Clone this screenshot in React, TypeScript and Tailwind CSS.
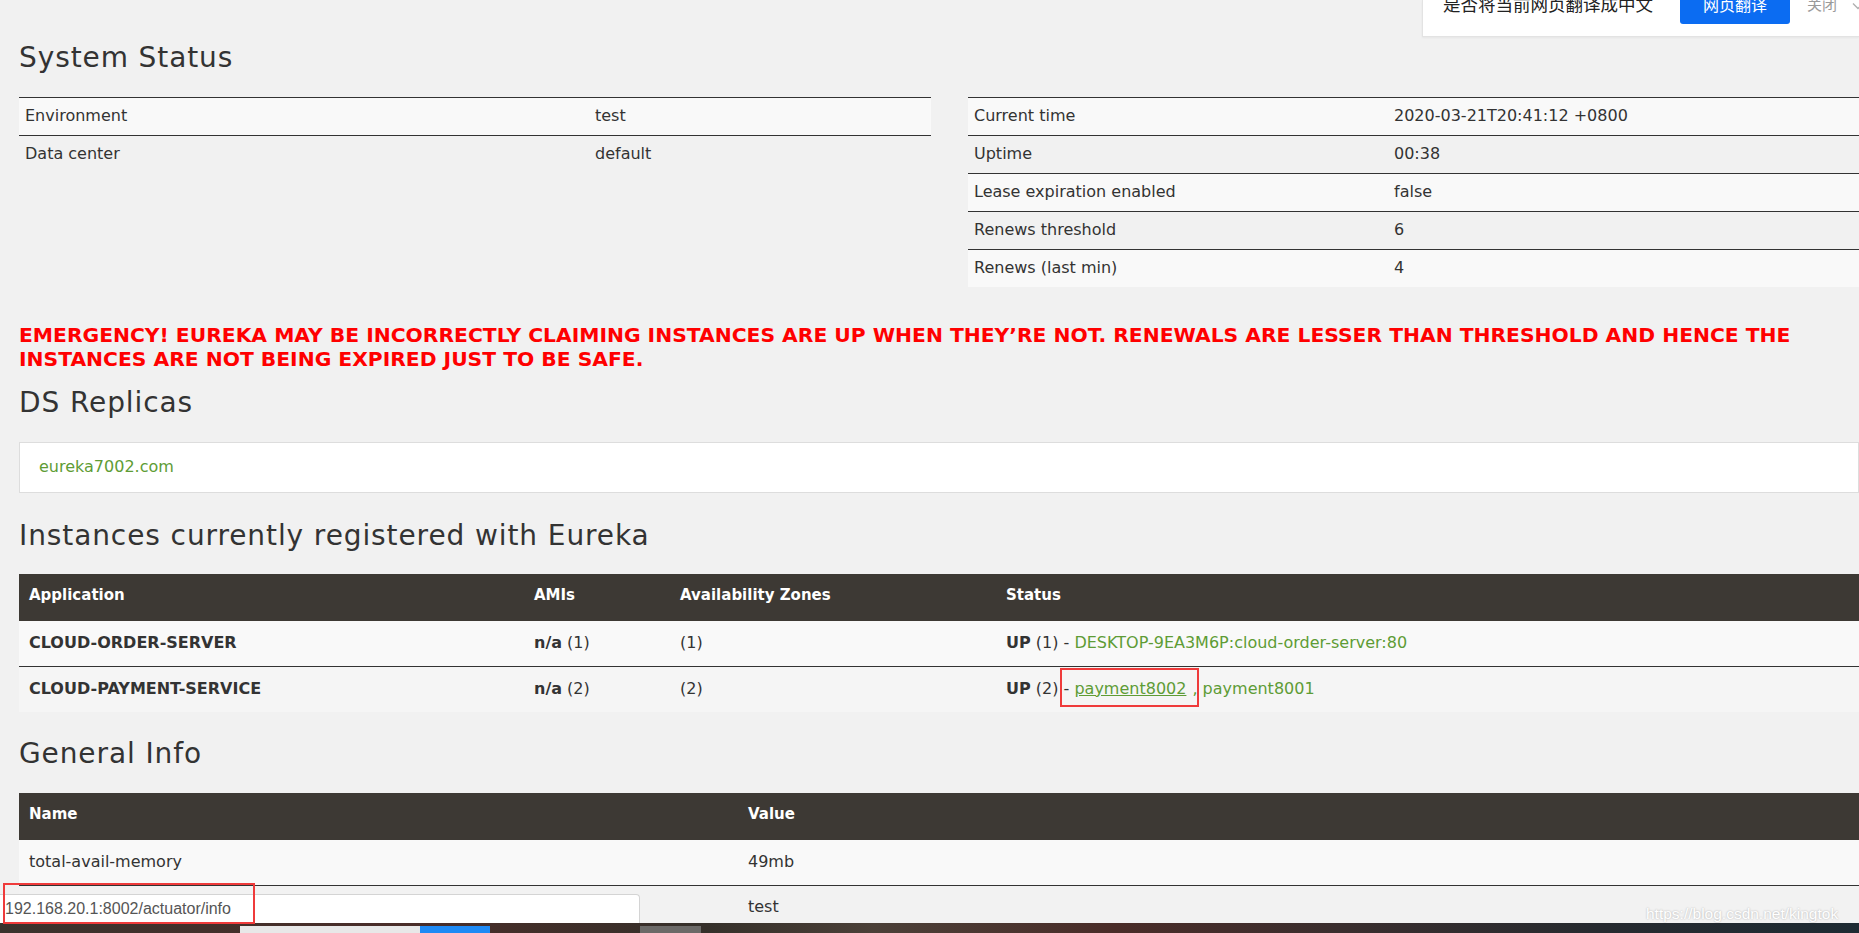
import React from "react";

const link = "text-[#5e9c35]";

function StatusTable({
  rows,
  labelClass,
}: {
  rows: [string, string][];
  labelClass: string;
}) {
  return (
    <div>
      {rows.map(([k, v], i) => (
        <div
          key={k}
          className={`flex h-[38px] items-center border-t border-[#333] pb-[2px] ${
            i % 2 === 0 ? "bg-[#f9f9f9]" : ""
          }`}
        >
          <div className={`${labelClass} shrink-0 px-[6px]`}>{k}</div>
          <div className="px-[6px]">{v}</div>
        </div>
      ))}
    </div>
  );
}

function Heading({ children, className = "" }: { children: React.ReactNode; className?: string }) {
  return (
    <h2 className={`h-[32px] text-[28px] leading-[32px] tracking-[0.9px] text-[#333] ${className}`}>
      {children}
    </h2>
  );
}

export default function App() {
  return (
    <div className="relative h-[933px] w-[1859px] overflow-hidden bg-[#f1f1f1] font-['DejaVu_Sans',sans-serif] text-[16px] text-[#333]">
      <div className="pl-[19px] pt-[42px]">
        <Heading>System Status</Heading>

        <div className="mt-[23px] flex gap-[37px]">
          <div className="w-[912px] shrink-0">
            <StatusTable
              labelClass="w-[570px]"
              rows={[
                ["Environment", "test"],
                ["Data center", "default"],
              ]}
            />
          </div>
          <div className="flex-1">
            <StatusTable
              labelClass="w-[420px]"
              rows={[
                ["Current time", "2020-03-21T20:41:12 +0800"],
                ["Uptime", "00:38"],
                ["Lease expiration enabled", "false"],
                ["Renews threshold", "6"],
                ["Renews (last min)", "4"],
              ]}
            />
          </div>
        </div>

        <div className="mt-[36px] text-[20.3px] font-bold leading-[24px] text-[#ff0000]">
          <div className="whitespace-nowrap">
            EMERGENCY! EUREKA MAY BE INCORRECTLY CLAIMING INSTANCES ARE UP WHEN THEY’RE NOT. RENEWALS ARE LESSER THAN THRESHOLD AND HENCE THE
          </div>
          <div className="whitespace-nowrap">INSTANCES ARE NOT BEING EXPIRED JUST TO BE SAFE.</div>
        </div>

        <Heading className="mt-[16px]">DS Replicas</Heading>
        <div className="mt-[23px] flex h-[51px] items-center border border-[#ddd] bg-white pb-[2px] pl-[19px]">
          <a className={link}>eureka7002.com</a>
        </div>

        <Heading className="mt-[27px]">Instances currently registered with Eureka</Heading>
        <div className="mt-[22px]">
          <div className="flex h-[47px] items-center bg-[#3d3934] pb-[5px] text-[15px] font-bold text-white">
            <div className="w-[505px] shrink-0 px-[10px]">Application</div>
            <div className="w-[146px] shrink-0 px-[10px]">AMIs</div>
            <div className="w-[326px] shrink-0 px-[10px]">Availability Zones</div>
            <div className="px-[10px]">Status</div>
          </div>
          <div className="flex h-[45px] items-center bg-[#f9f9f9] pb-[2px]">
            <div className="w-[505px] shrink-0 px-[10px] font-bold">CLOUD-ORDER-SERVER</div>
            <div className="w-[146px] shrink-0 px-[10px]">
              <b>n/a</b> (1)
            </div>
            <div className="w-[326px] shrink-0 px-[10px]">(1)</div>
            <div className="whitespace-nowrap px-[10px]">
              <b>UP</b> (1) - <a className={link}>DESKTOP-9EA3M6P:cloud-order-server:80</a>
            </div>
          </div>
          <div className="flex h-[46px] items-center border-t border-[#333] bg-[#f5f5f5] pb-[2px]">
            <div className="w-[505px] shrink-0 px-[10px] font-bold">CLOUD-PAYMENT-SERVICE</div>
            <div className="w-[146px] shrink-0 px-[10px]">
              <b>n/a</b> (2)
            </div>
            <div className="w-[326px] shrink-0 px-[10px]">(2)</div>
            <div className="whitespace-nowrap px-[10px]">
              <b>UP</b> (2) -{" "}
              <span className="relative inline-block leading-[19px]">
                <a className={`${link} underline`}>payment8002</a>
                <span className="absolute -bottom-[9px] -left-[14px] -right-[13px] -top-[11px] border-2 border-[#ef3b3b]" />
              </span>
              <span className={`${link} ml-[6px]`}>,</span> <a className={link}>payment8001</a>
            </div>
          </div>
        </div>

        <Heading className="mt-[26px]">General Info</Heading>
        <div className="mt-[23px]">
          <div className="flex h-[47px] items-center bg-[#3d3934] pb-[5px] text-[15px] font-bold text-white">
            <div className="w-[719px] shrink-0 px-[10px]">Name</div>
            <div className="px-[10px]">Value</div>
          </div>
          <div className="flex h-[45px] items-center bg-[#f9f9f9] pb-[2px]">
            <div className="w-[719px] shrink-0 px-[10px]">total-avail-memory</div>
            <div className="px-[10px]">49mb</div>
          </div>
          <div className="flex h-[48px] items-center border-t border-[#333] bg-[#f2f2f2] pb-[6px]">
            <div className="w-[719px] shrink-0 px-[10px]" />
            <div className="px-[10px]">test</div>
          </div>
        </div>
      </div>

      {/* translate prompt */}
      <div className="absolute right-0 top-0 h-[37px] w-[437px] border-b border-l border-[#e3e3e3] bg-white font-['Noto_Sans_CJK_SC',sans-serif] shadow-[0_1px_2px_rgba(0,0,0,0.05)]">
        <div className="-mt-[10px] flex items-start">
          <span className="ml-[20px] whitespace-nowrap text-[17.5px] leading-[28px] text-[#222]">
            是否将当前网页翻译成中文
          </span>
          <div className="ml-[27px] flex h-[34px] w-[110px] shrink-0 justify-center rounded-b-[3px] bg-[#0b6cf2] text-[16px] leading-[28px] text-white">
            网页翻译
          </div>
          <span className="ml-[17px] whitespace-nowrap text-[15px] leading-[28px] text-[#9a9a9a]">关闭</span>
          <svg className="ml-[15px] mt-[12px] shrink-0" width="12" height="8" viewBox="0 0 12 8" fill="none">
            <path d="M1 1.5 6 6.5 11 1.5" stroke="#b0b0b0" strokeWidth="1.4" />
          </svg>
        </div>
      </div>

      {/* browser status bubble */}
      <div className="absolute left-0 top-[894px] h-[29px] w-[640px] rounded-tr-[4px] border-r border-t border-[#d4d4d4] bg-white pl-[5px] font-['Liberation_Sans',sans-serif] text-[16px] leading-[28px] text-[#555]">
        192.168.20.1:8002/actuator/info
      </div>

      {/* watermark */}
      <div className="absolute left-[1646px] top-[905px] font-['Liberation_Sans',sans-serif] text-[15.5px] leading-[18px] text-white [text-shadow:0_0_2px_rgba(0,0,0,0.3)]">
        https://blog.csdn.net/kingtok
      </div>

      {/* desktop taskbar */}
      <div className="absolute bottom-0 left-0 flex h-[10px] w-full items-end bg-[linear-gradient(90deg,#3a332d_0%,#4a2d29_22%,#35302a_38%,#4b4038_47%,#4a2c28_60%,#3a2e2e_72%,#262a2f_86%,#1e2b33_100%)]">
        <div className="w-[240px] shrink-0" />
        <div className="h-[7px] w-[180px] shrink-0 bg-[#e8e8e8]" />
        <div className="h-[7px] w-[70px] shrink-0 bg-[#1e8af5]" />
        <div className="w-[150px] shrink-0" />
        <div className="h-[7px] w-[61px] shrink-0 bg-[#6c6a68]" />
        <span className="absolute left-[1779px] top-[8px] text-[13px] leading-[14px] text-white">20:41</span>
      </div>

      {/* annotation box */}
      <div className="absolute left-[3px] top-[883px] h-[41px] w-[252px] border-2 border-[#ef3b3b]" />
    </div>
  );
}
